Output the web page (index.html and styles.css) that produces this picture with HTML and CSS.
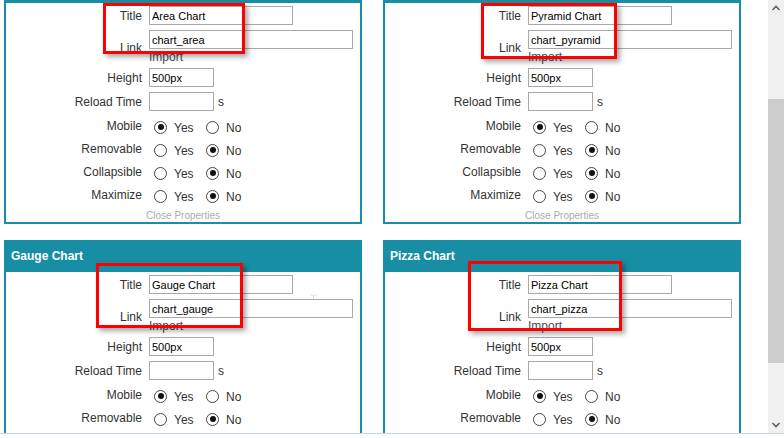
FILE: index.html
```html
<!doctype html>
<html>

<head>
<meta charset="utf-8" />
<title>Chart widgets</title>
<link rel="stylesheet" href="styles.css">
</head>

<body>

<div class="window">
	<div class="viewport">
		<div class="grid">

			<section class="panel">
				<h2>Area Chart</h2>
				<div class="body">
					<div class="mark mark-area"></div>
					<div class="row"><label>Title</label><input class="w-title" value="Area Chart"></div>
					<div class="row link"><label>Link</label><div class="stack"><input class="w-link" value="chart_area"><span class="import">Import</span></div></div>
					<div class="row"><label>Height</label><input class="w-small" value="500px"></div>
					<div class="row reload"><label>Reload Time</label><input class="w-small" value=""><span class="unit">s</span></div>
					<div class="row radio"><label>Mobile</label><span class="opt"><i class="on"></i>Yes</span><span class="opt"><i></i>No</span></div>
					<div class="row radio"><label>Removable</label><span class="opt"><i></i>Yes</span><span class="opt"><i class="on"></i>No</span></div>
					<div class="row radio"><label>Collapsible</label><span class="opt"><i></i>Yes</span><span class="opt"><i class="on"></i>No</span></div>
					<div class="row radio"><label>Maximize</label><span class="opt"><i></i>Yes</span><span class="opt"><i class="on"></i>No</span></div>
					<a class="close" href="#">Close Properties</a>
				</div>
			</section>

			<section class="panel">
				<h2>Pyramid Chart</h2>
				<div class="body">
					<div class="mark mark-pyramid"></div>
					<div class="row"><label>Title</label><input class="w-title" value="Pyramid Chart"></div>
					<div class="row link"><label>Link</label><div class="stack"><input class="w-link" value="chart_pyramid"><span class="import">Import</span></div></div>
					<div class="row"><label>Height</label><input class="w-small" value="500px"></div>
					<div class="row reload"><label>Reload Time</label><input class="w-small" value=""><span class="unit">s</span></div>
					<div class="row radio"><label>Mobile</label><span class="opt"><i class="on"></i>Yes</span><span class="opt"><i></i>No</span></div>
					<div class="row radio"><label>Removable</label><span class="opt"><i></i>Yes</span><span class="opt"><i class="on"></i>No</span></div>
					<div class="row radio"><label>Collapsible</label><span class="opt"><i></i>Yes</span><span class="opt"><i class="on"></i>No</span></div>
					<div class="row radio"><label>Maximize</label><span class="opt"><i></i>Yes</span><span class="opt"><i class="on"></i>No</span></div>
					<a class="close" href="#">Close Properties</a>
				</div>
			</section>

			<section class="panel">
				<h2>Gauge Chart</h2>
				<div class="body">
					<div class="mark mark-gauge"></div>
					<svg class="cursor" width="9" height="16" viewBox="0 0 9 16"><path d="M1.5 1 H3.5 L4.5 2 L5.5 1 H7.5 M4.5 2 V14 M1.5 15 H3.5 L4.5 14 L5.5 15 H7.5" fill="none" stroke="#dcdcdc" stroke-width="1"/></svg>
					<div class="row"><label>Title</label><input class="w-title" value="Gauge Chart"></div>
					<div class="row link"><label>Link</label><div class="stack"><input class="w-link" value="chart_gauge"><span class="import">Import</span></div></div>
					<div class="row"><label>Height</label><input class="w-small" value="500px"></div>
					<div class="row reload"><label>Reload Time</label><input class="w-small" value=""><span class="unit">s</span></div>
					<div class="row radio"><label>Mobile</label><span class="opt"><i class="on"></i>Yes</span><span class="opt"><i></i>No</span></div>
					<div class="row radio"><label>Removable</label><span class="opt"><i></i>Yes</span><span class="opt"><i class="on"></i>No</span></div>
					<div class="row radio"><label>Collapsible</label><span class="opt"><i></i>Yes</span><span class="opt"><i class="on"></i>No</span></div>
					<div class="row radio"><label>Maximize</label><span class="opt"><i></i>Yes</span><span class="opt"><i class="on"></i>No</span></div>
					<a class="close" href="#">Close Properties</a>
				</div>
			</section>

			<section class="panel">
				<h2>Pizza Chart</h2>
				<div class="body">
					<div class="mark mark-pizza"></div>
					<div class="row"><label>Title</label><input class="w-title" value="Pizza Chart"></div>
					<div class="row link"><label>Link</label><div class="stack"><input class="w-link" value="chart_pizza"><span class="import">Import</span></div></div>
					<div class="row"><label>Height</label><input class="w-small" value="500px"></div>
					<div class="row reload"><label>Reload Time</label><input class="w-small" value=""><span class="unit">s</span></div>
					<div class="row radio"><label>Mobile</label><span class="opt"><i class="on"></i>Yes</span><span class="opt"><i></i>No</span></div>
					<div class="row radio"><label>Removable</label><span class="opt"><i></i>Yes</span><span class="opt"><i class="on"></i>No</span></div>
					<div class="row radio"><label>Collapsible</label><span class="opt"><i></i>Yes</span><span class="opt"><i class="on"></i>No</span></div>
					<div class="row radio"><label>Maximize</label><span class="opt"><i></i>Yes</span><span class="opt"><i class="on"></i>No</span></div>
					<a class="close" href="#">Close Properties</a>
				</div>
			</section>

		</div>
	</div>

	<div class="scrollbar">
		<svg class="arrow" width="16" height="17" viewBox="0 0 16 17"><path d="M4.5 10 L8 6.5 L11.5 10" fill="none" stroke="#606060" stroke-width="1.6"/></svg>
		<div class="track"><div class="thumb"></div></div>
		<svg class="arrow" width="16" height="17" viewBox="0 0 16 17"><path d="M4.5 7 L8 10.5 L11.5 7" fill="none" stroke="#606060" stroke-width="1.6"/></svg>
	</div>
</div>

</body>

</html>
```

FILE: styles.css
```css
* {
	margin: 0;
	padding: 0;
	box-sizing: border-box;
}
html, body {
	width: 100%;
	height: 100%;
	overflow: hidden;
	background: #fff;
}
body {
	font-family: "Liberation Sans", Arial, sans-serif;
	font-size: 12px;
	color: #333;
}
.window {
	display: flex;
	height: 434px;
	border-bottom: 1px solid #c9d8e5;
}
.viewport {
	flex: 1;
	overflow: hidden;
}
.scrollbar {
	width: 16px;
	display: flex;
	flex-direction: column;
	background: #f0f0f0;
}
.scrollbar .arrow {
	display: block;
	flex: none;
}
.scrollbar .track {
	flex: 1;
	padding-top: 82px;
}
.scrollbar .thumb {
	height: 264px;
	background: #cdcdcd;
}

.grid {
	display: grid;
	grid-template-columns: 1fr 1fr;
	column-gap: 21px;
	row-gap: 16px;
	padding: 0 27px 0 4px;
	margin-top: -29px;
}
.panel {
	border: 2px solid #178ea4;
}
.panel h2 {
	height: 30px;
	line-height: 28px;
	padding-left: 5px;
	background: #178ea4;
	color: #fff;
	font-size: 12px;
	font-weight: bold;
}
.body {
	position: relative;
	padding-top: 3px;
	display: flex;
	flex-direction: column;
}

.row {
	display: flex;
	align-items: center;
	min-height: 19px;
	margin-bottom: 5px;
}
.row label {
	width: 136px;
	flex: none;
	text-align: right;
	margin-right: 7px;
}
.row.link {
	margin-bottom: 2px;
}
.row.reload {
	margin-bottom: 4px;
}
.row.radio {
	height: 23px;
	margin-bottom: 0;
}
.row.radio label {
	padding-bottom: 1px;
}
.stack {
	display: flex;
	flex-direction: column;
	align-items: flex-start;
}
input {
	position: relative;
	height: 19px;
	border: 1px solid #a9a9a9;
	padding: 0 2px;
	font-family: "Liberation Sans", Arial, sans-serif;
	font-size: 11px;
	color: #000;
	background: #fff;
	outline: none;
}
.w-title {
	width: 144px;
}
.w-link {
	width: 204px;
}
.w-small {
	width: 65px;
}
.import {
	margin-top: -1px;
	line-height: 18px;
	color: #4d4957;
}
.unit {
	margin-left: 4px;
}

.opt {
	display: flex;
	align-items: center;
	padding-top: 2px;
	width: 52px;
	margin-left: 5px;
}
.opt + .opt {
	margin-left: 0;
}
.opt i {
	width: 13px;
	height: 13px;
	border: 1px solid #444;
	border-radius: 50%;
	margin-right: 7px;
	margin-top: -1px;
	display: flex;
	align-items: center;
	justify-content: center;
	background: #fff;
}
.opt i.on::after {
	content: "";
	width: 6px;
	height: 6px;
	border-radius: 50%;
	background: #111;
}

.close {
	align-self: center;
	margin-top: 2px;
	line-height: 13px;
	font-size: 10px;
	color: #aaa;
	text-decoration: none;
}

.mark {
	position: absolute;
	z-index: 2;
	border: 3px solid #f00;
	box-shadow: 3px 3px 5px rgba(0, 0, 0, 0.35);
}
.mark-area {
	left: 97px;
	top: 0;
	width: 142px;
	height: 51px;
}
.mark-pyramid {
	left: 96px;
	top: 0;
	width: 136px;
	height: 56px;
}
.mark-gauge {
	left: 90px;
	top: -9px;
	width: 147px;
	height: 65px;
}
.mark-pizza {
	left: 83px;
	top: -11px;
	width: 154px;
	height: 70px;
}
.cursor {
	position: absolute;
	left: 303px;
	top: 22px;
}
```
